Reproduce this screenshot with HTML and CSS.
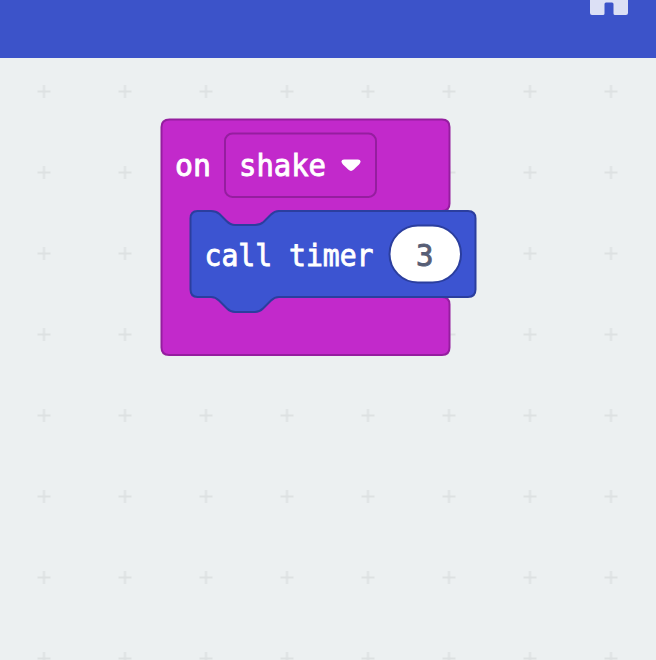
FILE: index.html
```html
<!DOCTYPE html>
<html lang="en">
<head>
<meta charset="utf-8">
<title>Block editor</title>
<link rel="stylesheet" href="styles.css">
</head>
<body>
<header class="toolbar">
  <svg class="home" width="38" height="16" viewBox="0 0 38 16" role="img" aria-label="Home">
    <path d="M0 0H38V13Q38 15 36 15H25Q23.500 15 23.500 13.500V4Q23.500 2.500 22 2.500H16Q14.500 2.500 14.500 4V13.500Q14.500 15 13 15H2Q0 15 0 13Z"/>
  </svg>
</header>
<main class="workspace">
  <svg class="canvas" viewBox="0 58 656 602" width="656" height="602">
    <defs>
      <pattern id="grid" x="3.500" y="51" width="81" height="81" patternUnits="userSpaceOnUse">
        <path class="cross" d="M34 40.500H47M40.500 34V47"/>
      </pattern>
    </defs>
    <rect y="58" width="656" height="602" fill="url(#grid)"/>
    <g class="event">
      <path class="shape" d="M169.500 119.500H442Q449.500 119.500 449.500 127V203.500Q449.500 211 442 211H279L264 226H228L211 240V275L228 297H442Q449.500 297 449.500 304.500V347.500Q449.500 355 442 355H169Q161.500 355 161.500 347.500V127Q161.500 119.500 169.500 119.500Z"/>
      <rect class="shape" x="225" y="133.500" width="151" height="63.500" rx="7.500"/>
      <text class="label" x="175" y="176" textLength="36" lengthAdjust="spacingAndGlyphs">on</text>
      <text class="label" x="239" y="176" textLength="87" lengthAdjust="spacingAndGlyphs">shake</text>
      <path class="arrow" d="M344 159.500H358Q360.500 159.500 360.500 161.500Q360.500 163 359 164.500L353.500 169.800Q351 172 348.500 169.800L343 164.500Q341.500 163 341.500 161.500Q341.500 159.500 344 159.500Z"/>
    </g>
    <g class="call">
      <path class="shape" d="M197.500 211H211Q216 211 219.500 214L226.500 221Q230.500 225 235 225H255Q260 225 263.500 222L271 214.500Q274.500 211 279 211H468Q475.500 211 475.500 218.500V289.500Q475.500 297 468 297H279Q274.500 297 271 300.500L263 308.500Q259.500 312 255 312H235Q230.500 312 227 308.500L219 300.500Q215.500 297 211 297H197.500Q190.500 297 190.500 289.500V218.500Q190.500 211 197.500 211Z"/>
      <text class="label" x="204.500" y="265.500" textLength="169" lengthAdjust="spacingAndGlyphs">call timer</text>
      <rect class="number" x="389.500" y="225.500" width="71.500" height="57" rx="28.500"/>
      <text class="value" x="416" y="265.500" textLength="17.500" lengthAdjust="spacingAndGlyphs">3</text>
    </g>
  </svg>
</main>
</body>
</html>
```
FILE: styles.css
```css
body {
  margin: 0;
  height: 660px;
  display: flex;
  flex-direction: column;
  overflow: hidden;
  background: #ecf0f1;
}
.toolbar {
  height: 58px;
  flex: none;
  display: flex;
  justify-content: flex-end;
  padding-right: 28px;
  background: #3c53c9;
}
.home { fill: #dce0f5; }
.workspace { flex: 1; }
.canvas { display: block; }
.cross { stroke: #dde1e2; stroke-width: 2; fill: none; }
.shape { stroke-width: 2; }
.event .shape { fill: #c229cb; stroke: #951e9f; }
.call .shape { fill: #3c54d1; stroke: #2b3e9e; }
.number { fill: #fff; stroke: #2b3e9e; stroke-width: 2; }
.arrow { fill: #fff; }
.label, .value {
  font-family: "DejaVu Sans Mono", monospace;
  font-size: 31px;
  white-space: pre;
}
.label { fill: #fff; stroke: #fff; stroke-width: .9; }
.value { fill: #575e75; stroke: #575e75; stroke-width: .9; }
```
